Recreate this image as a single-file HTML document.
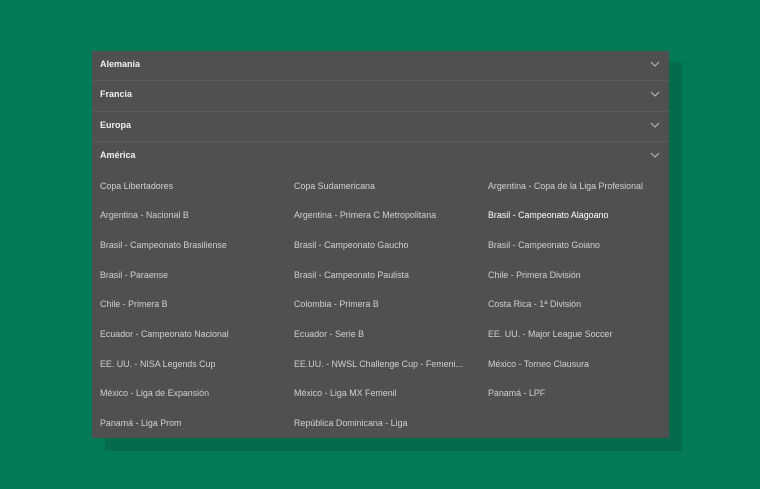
<!DOCTYPE html>
<html><head><style>
body{margin:0;width:760px;height:489px;background:#027a58;position:relative;overflow:hidden;font-family:"Liberation Sans",sans-serif}
.sh{position:absolute;left:105px;top:62px;width:577px;height:389px;background:#066b4e}
.p{position:absolute;left:92px;top:51px;width:577px;height:387px;background:#505050}
.h{height:29.4px;border-bottom:1px solid #5b5b5b;position:relative;color:#f0f0f0;font-weight:bold;font-size:9px;line-height:26px;padding-left:8px}
.h:nth-child(4){border-bottom:none}
.h svg{position:absolute;left:558px;top:10px}
.g{display:grid;grid-template-columns:194px 194px 189px;padding-left:8px;margin-top:0px}
.g div{height:29.7px;line-height:29.7px;font-size:8.9px;color:#d0d0d0;white-space:nowrap}
</style></head><body>
<div class="sh"></div>
<div class="p">
<div class="h">Alemania<svg width="10" height="6"><path d="M1 1L5 5L9 1" stroke="#bbb" fill="none" stroke-width="1"/></svg></div>
<div class="h">Francia<svg width="10" height="6"><path d="M1 1L5 5L9 1" stroke="#bbb" fill="none" stroke-width="1"/></svg></div>
<div class="h">Europa<svg width="10" height="6"><path d="M1 1L5 5L9 1" stroke="#bbb" fill="none" stroke-width="1"/></svg></div>
<div class="h">América<svg width="10" height="6"><path d="M1 1L5 5L9 1" stroke="#bbb" fill="none" stroke-width="1"/></svg></div>
<div class="g">
<div>Copa Libertadores</div><div>Copa Sudamericana</div><div>Argentina - Copa de la Liga Profesional</div>
<div>Argentina - Nacional B</div><div>Argentina - Primera C Metropolitana</div><div style="color:#fff">Brasil - Campeonato Alagoano</div>
<div>Brasil - Campeonato Brasiliense</div><div>Brasil - Campeonato Gaucho</div><div>Brasil - Campeonato Goiano</div>
<div>Brasil - Paraense</div><div>Brasil - Campeonato Paulista</div><div>Chile - Primera División</div>
<div>Chile - Primera B</div><div>Colombia - Primera B</div><div>Costa Rica - 1ª División</div>
<div>Ecuador - Campeonato Nacional</div><div>Ecuador - Serie B</div><div>EE. UU. - Major League Soccer</div>
<div>EE. UU. - NISA Legends Cup</div><div>EE.UU. - NWSL Challenge Cup - Femeni...</div><div>México - Torneo Clausura</div>
<div>México - Liga de Expansión</div><div>México - Liga MX Femenil</div><div>Panamá - LPF</div>
<div>Panamá - Liga Prom</div><div>República Dominicana - Liga</div><div></div>
</div>
</div>
</body></html>
